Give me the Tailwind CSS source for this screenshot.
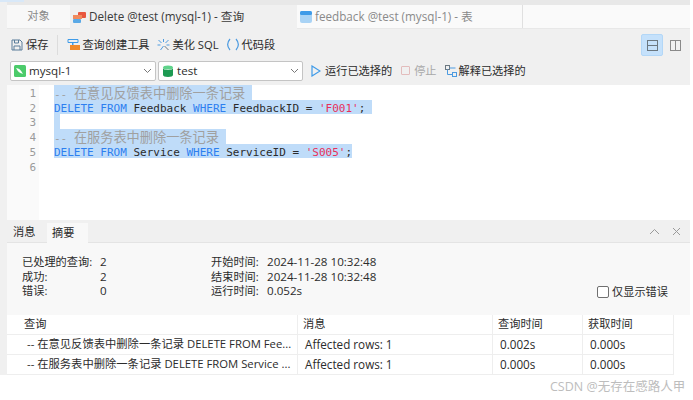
<!DOCTYPE html>
<html lang="zh">
  <head>
    <meta charset="UTF-8" />
    <script src="https://cdn.jsdelivr.net/npm/@tailwindcss/browser@4"></script>
    <title>Delete @test (mysql-1) - 查询</title>
  </head>
  <body class="w-[693px] h-[400px] overflow-hidden bg-white text-[#2b2b2b] font-['Open_Sans','Noto_Sans_CJK_SC',sans-serif] text-[11.2px]">
    <div class="relative flex w-full h-full">
      <!-- selection sliver at the top left -->
      <div class="absolute left-0 top-0 w-[24px] h-[2px] bg-[#d8e8f8]"></div>
      <!-- left strip -->
      <div class="w-[7px] shrink-0 h-[375px] bg-[#f0f0f0]"></div>

      <div class="flex flex-col w-[683px] shrink-0">
        <div class="h-[5px] bg-[#e8e8e8]"></div>
        <!-- tabs -->
        <div class="flex h-[24px] bg-[#fafafa] border-b border-[#e8e8e8] text-[11.7px]">
          <div class="w-[63px] flex items-center justify-center text-[#8a8a8a] bg-[#f8f8f8] text-[11.2px]">对象</div>
          <div class="w-[227px] flex items-center gap-[3px] pl-[3px] bg-[#f0f0f0] -mb-px">
            <svg width="13" height="13" viewBox="0 0 13 13"><rect x="5" y="1" width="8" height="6" rx="1" fill="#e8573f"/><rect x="0" y="4" width="9" height="4" fill="#f08a5d"/><rect x="0" y="8" width="8" height="4" rx="1" fill="#5aa9e6"/></svg>
            <span class="text-[#3a3a3a]">Delete @test (mysql-1) - 查询</span>
          </div>
          <div class="w-[226px] flex items-center gap-[3px] pl-[3px] text-[#8a8a8a] border-r border-[#e0e0e0]">
            <svg width="12" height="12" viewBox="0 0 12 12"><rect width="12" height="12" rx="2" fill="#a9d3f5"/><rect width="12" height="4" rx="1.5" fill="#3f9be8"/></svg>
            <span>feedback @test (mysql-1) - 表</span>
          </div>
        </div>
        <!-- toolbar -->
        <div class="h-[56px] bg-[#f0f0f0] flex flex-col">
          <div class="h-[32px] flex items-center relative">
            <div class="flex items-center gap-[3px] pl-[4px] pr-[9px] border-r border-[#dcdcdc] h-[20px]">
              <svg width="12" height="12" viewBox="0 0 12 12" fill="none" stroke="#5a7d9a"><path d="M1 1h8l2 2v8H1zM3.500 1v3h4V1M3 11V7h6v4"/></svg>
              <span>保存</span>
            </div>
            <div class="flex items-center gap-[2px] pl-[9px]">
              <svg width="13" height="13" viewBox="0 0 13 13"><path d="M1 1.500h10v3H1z" fill="none" stroke="#3f9be8"/><path d="M5 4h1.500v3H5z" fill="#3f9be8"/><rect x="3" y="7" width="10" height="5" fill="#f08a2c"/></svg>
              <span>查询创建工具</span>
            </div>
            <div class="flex items-center gap-[3px] pl-[7px]">
              <svg width="13" height="12" viewBox="0 0 12 12" fill="none" stroke="#4d9be0"><path d="M1 1l3 3M6 0v3M11 1L8 4M0 6h3M9 6h3M3 11l3-4"/><path d="M7 7l4 4" stroke="#6b7780"/></svg>
              <span>美化 SQL</span>
            </div>
            <div class="flex items-center gap-[3px] pl-[8px]">
              <svg width="12" height="13" viewBox="0 0 12 13" fill="none" stroke="#4d9be0" stroke-width="1.200"><path d="M3 1C0 4.500 0 8.500 3 12M9 1c3 3.500 3 7.500 0 11"/></svg>
              <span>代码段</span>
            </div>
            <div class="absolute left-[634px] top-[5px] w-[22px] h-[22px] flex items-center justify-center bg-[#c5e1fb] border border-[#b3d7f7] rounded-[2px]">
              <svg width="11" height="11" viewBox="0 0 11 11" fill="none" stroke="#6b7780"><rect x="0.500" y="0.500" width="10" height="10"/><path d="M0 5.500h11"/></svg>
            </div>
            <div class="absolute left-[657px] top-[5px] w-[22px] h-[22px] flex items-center justify-center">
              <svg width="11" height="11" viewBox="0 0 11 11" fill="none" stroke="#8a8a8a"><rect x="0.500" y="0.500" width="10" height="10"/><path d="M5.500 0v11"/></svg>
            </div>
          </div>
          <div class="flex items-center h-[20px] gap-[2px] pl-[3px]">
            <div class="w-[146px] h-[20px] bg-white border border-[#c4c4c4] flex items-center gap-[3px] pl-[3px] rounded-[2px] relative">
              <svg width="12" height="12" viewBox="0 0 12 12"><rect width="12" height="12" rx="1.500" fill="#4ccb6a"/><path d="M2 3c3 0 5 2 7 6-3-1-5-2-7-6z" fill="#fff"/></svg>
              <span class="text-[11.600px]">mysql-1</span>
              <svg class="absolute right-[3px] top-[6px]" width="9" height="6" viewBox="0 0 9 6" fill="none" stroke="#777"><path d="M1 1l3.500 3.500L8 1"/></svg>
            </div>
            <div class="w-[145px] h-[20px] bg-white border border-[#c4c4c4] flex items-center gap-[3px] pl-[3px] rounded-[2px] relative">
              <svg width="12" height="12" viewBox="0 0 12 12"><ellipse cx="6" cy="2.500" rx="5" ry="2" fill="#5fd38a"/><path d="M1 3v7c0 1.100 2 2 5 2s5-.9 5-2V3c0 1.100-2 2-5 2S1 4.100 1 3z" fill="#1d9a52"/></svg>
              <span class="text-[11.600px]">test</span>
              <svg class="absolute right-[3px] top-[6px]" width="9" height="6" viewBox="0 0 9 6" fill="none" stroke="#777"><path d="M1 1l3.500 3.500L8 1"/></svg>
            </div>
            <div class="flex items-center gap-[4px] pl-[6px]">
              <svg width="10" height="12" viewBox="0 0 10 12" fill="none" stroke="#3f9be8" stroke-width="1.200"><path d="M1 1l8 5-8 5z"/></svg>
              <span>运行已选择的</span>
            </div>
            <div class="flex items-center gap-[4px] pl-[7px] text-[#a8a8a8]">
              <span class="w-[9px] h-[9px] border border-[#e3bcbc] rounded-[1px]"></span>
              <span>停止</span>
            </div>
            <div class="flex items-center gap-[2px] pl-[6px]">
              <svg width="12" height="12" viewBox="0 0 12 12" fill="none" stroke="#4d9be0"><rect x="0.500" y="0.500" width="4" height="4" stroke="#6b7780"/><rect x="7.500" y="7.500" width="4" height="4"/><path d="M2.500 4.500v5h5M4.500 3h6"/></svg>
              <span>解释已选择的</span>
            </div>
          </div>
        </div>
        <!-- editor -->
        <div class="h-[135px] flex bg-white font-['DejaVu_Sans_Mono','Noto_Sans_CJK_SC',monospace] text-[11px] leading-[14.700px]">
          <div class="w-[32px] bg-[#fafafa] text-[#9a9a9a] text-right pr-[3px] pt-[2px]">
            <div>1</div><div>2</div><div>3</div><div>4</div><div>5</div><div>6</div>
          </div>
          <div class="pl-[15px]">
            <div class="w-[198px] h-[14.700px] pt-[2px] bg-[#bfdcf9] text-[#a0a0a0] whitespace-pre">-- <span class="text-[13.200px]">在意见反馈表中删除一条记录</span></div>
            <div class="w-[318px] h-[14.700px] pt-[2px] bg-[#bfdcf9] whitespace-pre"><span class="text-[#2d7ff0]">DELETE FROM</span> Feedback <span class="text-[#2d7ff0]">WHERE</span> FeedbackID = <span class="text-[#e8305a]">'F001'</span>;</div>
            <div class="w-[6px] h-[14.700px] bg-[#bfdcf9]"></div>
            <div class="w-[172px] h-[14.700px] pt-[2px] bg-[#bfdcf9] text-[#a0a0a0] whitespace-pre">-- <span class="text-[13.200px]">在服务表中删除一条记录</span></div>
            <div class="w-[298px] h-[14.700px] pt-[2px] bg-[#bfdcf9] whitespace-pre"><span class="text-[#2d7ff0]">DELETE FROM</span> Service <span class="text-[#2d7ff0]">WHERE</span> ServiceID = <span class="text-[#e8305a]">'S005'</span>;</div>
          </div>
        </div>
        <!-- panel tabs -->
        <div class="h-[23px] bg-[#f0f0f0] flex border-b border-[#e4e4e4] relative">
          <div class="w-[40px] flex items-center pl-[6px] pt-[3px]">消息</div>
          <div class="w-[41px] mt-[3px] flex items-center pl-[5px] bg-[#f8f8f8] -mb-px">摘要</div>
          <svg class="absolute left-[642px] top-[8px]" width="11" height="7" viewBox="0 0 11 7" fill="none" stroke="#9a9a9a"><path d="M1 6l4.500-4.500L10 6"/></svg>
          <svg class="absolute left-[665px] top-[7px]" width="9" height="9" viewBox="0 0 9 9" fill="none" stroke="#9a9a9a"><path d="M1 1l7 7M8 1L1 8"/></svg>
        </div>
        <!-- summary -->
        <div class="h-[72px] bg-[#f8f8f8] pt-[12px] pl-[15px] relative">
          <div class="grid grid-cols-[78px_111px_56px_auto] leading-[14.500px]">
            <div>已处理的查询:</div><div class="text-[11.600px]">2</div><div>开始时间:</div><div class="text-[11.600px]">2024-11-28 10:32:48</div>
            <div>成功:</div><div class="text-[11.600px]">2</div><div>结束时间:</div><div class="text-[11.600px]">2024-11-28 10:32:48</div>
            <div>错误:</div><div class="text-[11.600px]">0</div><div>运行时间:</div><div class="text-[11.600px]">0.052s</div>
          </div>
          <div class="absolute left-[590px] top-[41px] flex items-center gap-[3px]">
            <span class="w-[12px] h-[12px] border border-[#707070] rounded-[2px] bg-white"></span>
            <span>仅显示错误</span>
          </div>
        </div>
        <!-- result table -->
        <div class="w-[667px] grid grid-cols-[291px_195px_90px_91px] auto-rows-[20px] text-[11.300px]">
          <div class="flex items-center pl-[17px] border-r border-b border-[#eeeeee] text-[11.200px]">查询</div>
          <div class="flex items-center pl-[5px] border-r border-b border-[#eeeeee] text-[11.200px]">消息</div>
          <div class="flex items-center pl-[5px] border-r border-b border-[#eeeeee] text-[11.200px]">查询时间</div>
          <div class="flex items-center pl-[5px] border-r border-b border-[#eeeeee] text-[11.200px]">获取时间</div>

          <div class="flex items-center pl-[20px] border-r border-b border-[#eeeeee] whitespace-nowrap">-- 在意见反馈表中删除一条记录 DELETE FROM Fee...</div>
          <div class="flex items-center pl-[7px] border-r border-b border-[#eeeeee] text-[11.700px]">Affected rows: 1</div>
          <div class="flex items-center pl-[7px] border-r border-b border-[#eeeeee] text-[11.700px]">0.002s</div>
          <div class="flex items-center pl-[7px] border-r border-b border-[#eeeeee] text-[11.700px]">0.000s</div>

          <div class="flex items-center pl-[20px] border-r border-b border-[#eeeeee] whitespace-nowrap">-- 在服务表中删除一条记录 DELETE FROM Service ...</div>
          <div class="flex items-center pl-[7px] border-r border-b border-[#eeeeee] text-[11.700px]">Affected rows: 1</div>
          <div class="flex items-center pl-[7px] border-r border-b border-[#eeeeee] text-[11.700px]">0.000s</div>
          <div class="flex items-center pl-[7px] border-r border-b border-[#eeeeee] text-[11.700px]">0.000s</div>
        </div>
      </div>
      <div class="absolute left-[550px] top-[378px] text-[12.500px] text-[#bdbdbd]">CSDN @无存在感路人甲</div>
    </div>
  </body>
</html>
